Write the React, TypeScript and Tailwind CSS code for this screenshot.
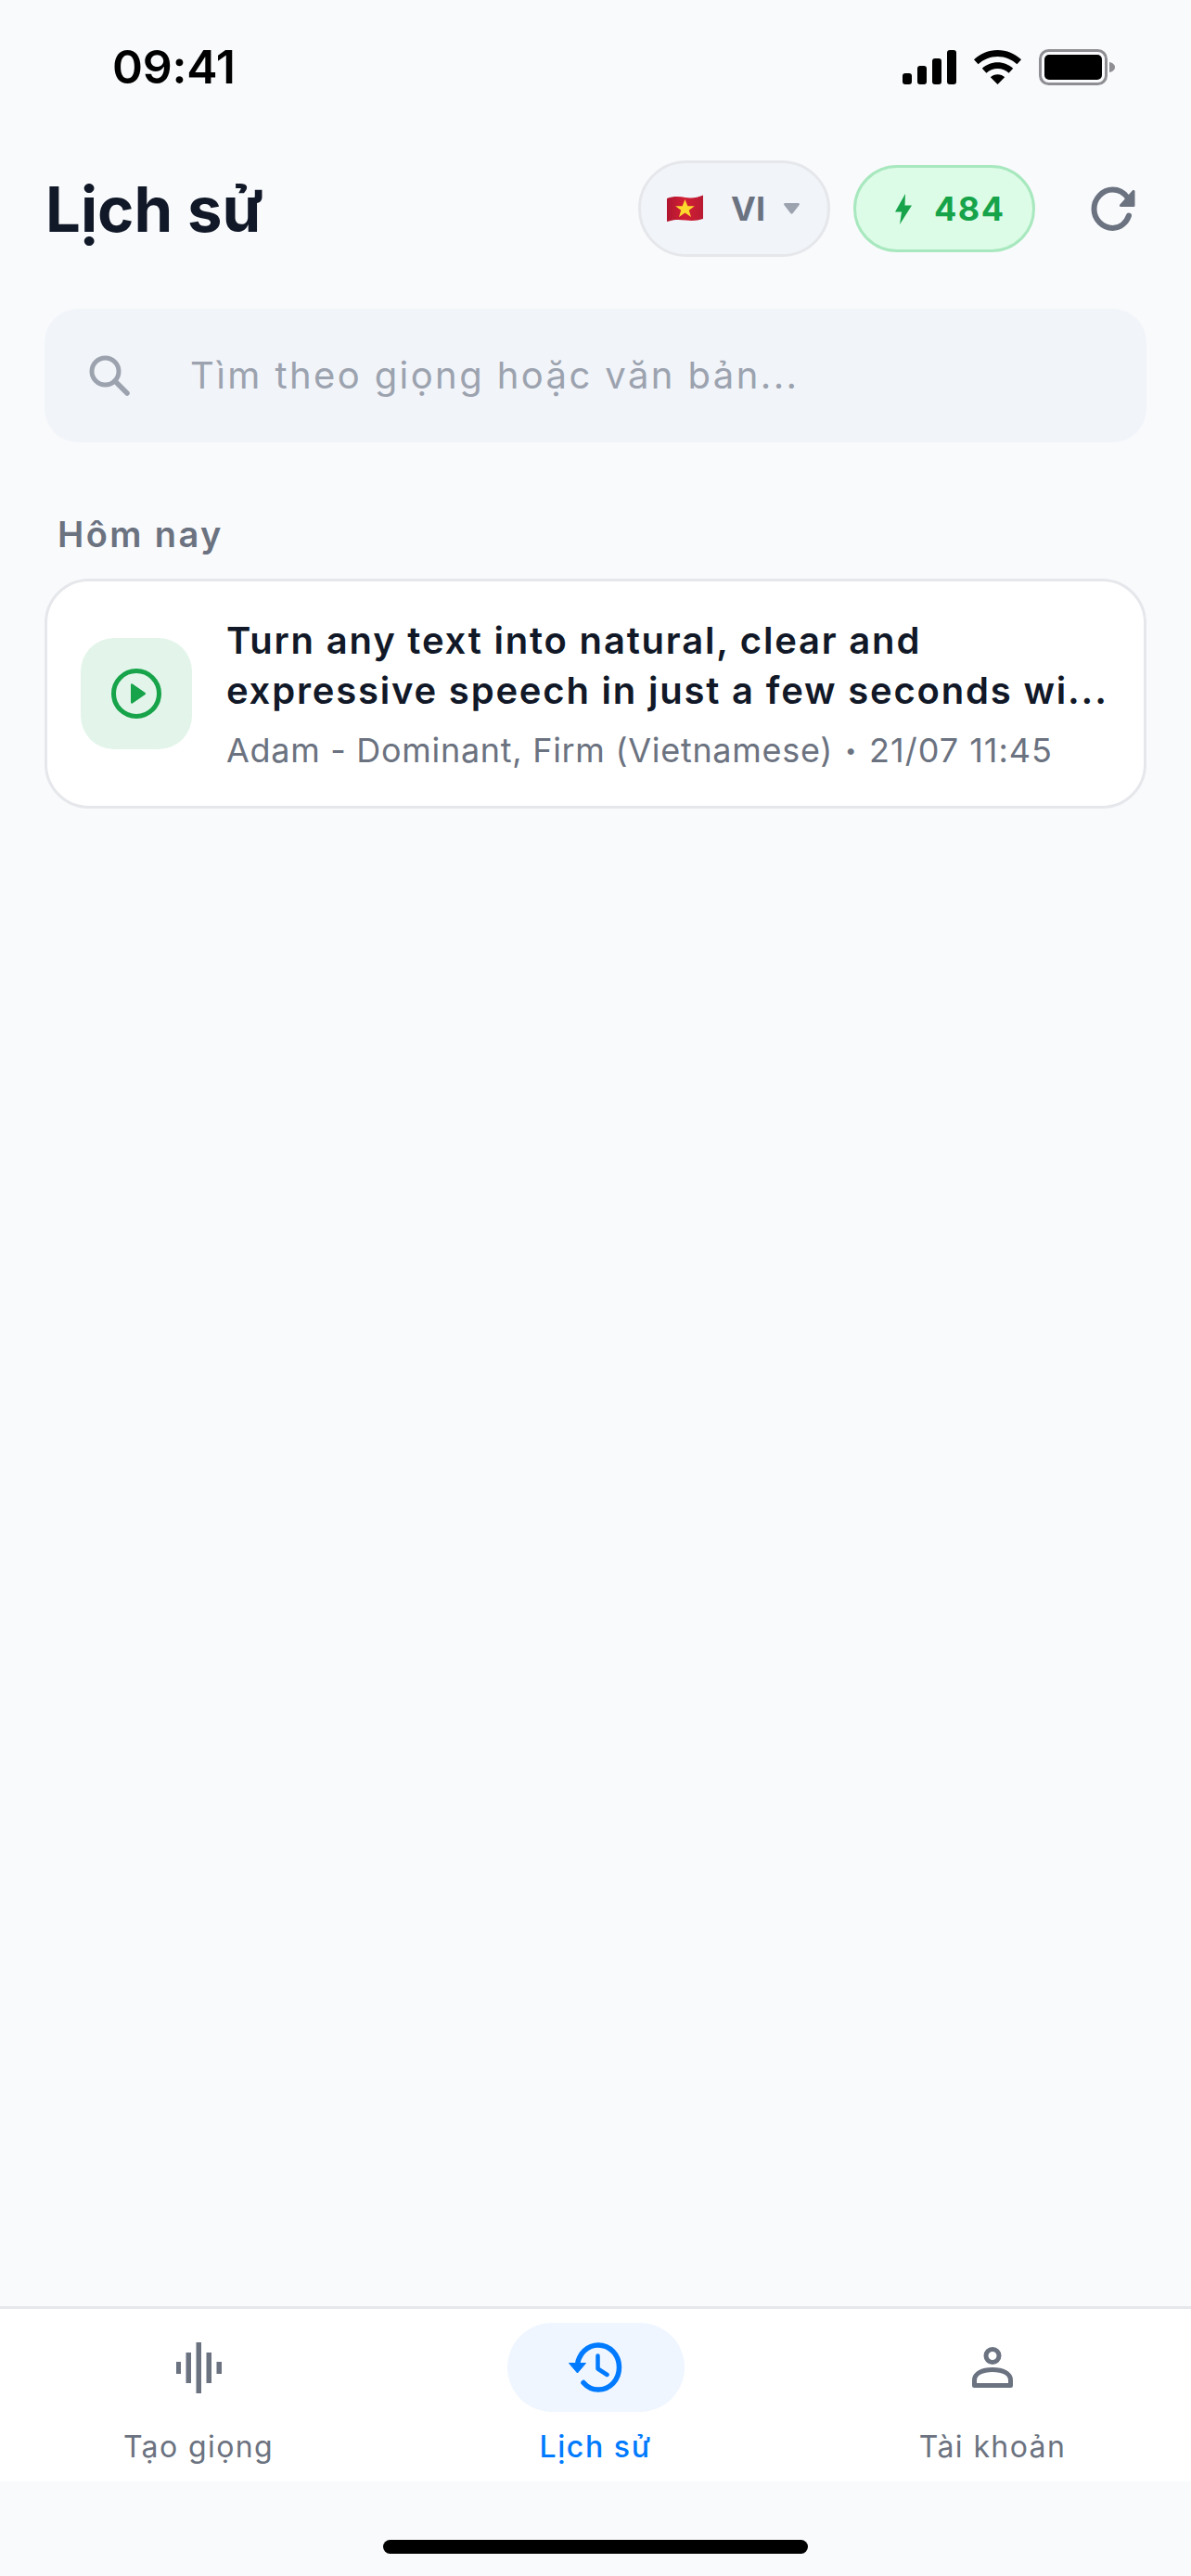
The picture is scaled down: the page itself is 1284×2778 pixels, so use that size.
import React from 'react';

const StatusIcons = () => (
  <div className="flex items-center gap-[19px]">
    <svg width="58" height="37" viewBox="0 0 58 37" fill="#000">
      <rect x="0" y="25" width="10" height="12" rx="3" />
      <rect x="16" y="17" width="10" height="20" rx="3" />
      <rect x="32" y="9" width="10" height="28" rx="3" />
      <rect x="48" y="0" width="10" height="37" rx="3" />
    </svg>
    <svg width="51" height="37" viewBox="0 0 51 37" fill="#000">
      <path d="M25.5 0C35.4 0 44.2 3.9 51 10.2L46.4 15.2C40.9 10.1 33.6 6.9 25.5 6.9C17.4 6.9 10.1 10.1 4.6 15.2L0 10.2C6.8 3.9 15.6 0 25.5 0Z" />
      <path d="M25.5 13.2C31.9 13.2 37.7 15.6 42.2 19.7L37.6 24.7C34.4 21.8 30.2 20.1 25.5 20.1C20.8 20.1 16.6 21.8 13.4 24.7L8.8 19.7C13.3 15.6 19.1 13.2 25.5 13.2Z" />
      <path d="M25.5 26.3C28.5 26.3 31.1 27.4 33.2 29.2L25.5 37L17.8 29.2C19.9 27.4 22.5 26.3 25.5 26.3Z" />
    </svg>
    <svg width="82" height="39" viewBox="0 0 82 39">
      <rect x="1.5" y="1.5" width="71" height="36" rx="9" fill="none" stroke="#8e8e93" strokeWidth="3" />
      <rect x="6" y="6" width="62" height="27" rx="5" fill="#000" />
      <path d="M76 14C79.500 14.600 82 16.800 82 19.500C82 22.200 79.500 24.400 76 25Z" fill="#8e8e93" />
    </svg>
  </div>
);

const Flag = () => (
  <svg width="39" height="30" viewBox="0 0 39 30">
    <defs>
      <linearGradient id="vn" x1="0" y1="0" x2="1" y2="0">
        <stop offset="0" stopColor="#b01530" />
        <stop offset="0.5" stopColor="#d21f35" />
        <stop offset="1" stopColor="#b81a32" />
      </linearGradient>
    </defs>
    <path d="M0 4C8 1 14 2 20 3C27 4 33 3 39 0.500V26C33 28 27 28.500 20 27.500C13 26.500 7 26.500 0 29Z" fill="url(#vn)" />
    <path d="M19.500 5L22.400 12.300H29.800L23.800 16.800L26 24L19.500 19.600L13 24L15.200 16.800L9.200 12.300H16.600Z" fill="#fcd92c" />
  </svg>
);

const RefreshIcon = () => (
  <svg width="48" height="48" viewBox="0 0 48 48" fill="none">
    <path d="M41 31.500C38.300 39.500 31.500 45 23.500 45C12.700 45 3.500 35.700 3.500 24.500C3.500 13.300 12.700 3.500 23.500 3.500C30.300 3.500 35.800 6.800 39.500 12" stroke="#6b7280" strokeWidth="6" strokeLinecap="round" />
    <path d="M47.500 5.500V20.500C47.500 21.500 46.800 22 46 22H32.500C31 22 30.400 20.400 31.400 19.400L44.800 4.500C45.800 3.600 47.500 4 47.500 5.500Z" fill="#6b7280" />
  </svg>
);

const PlayIcon = () => (
  <svg width="54" height="54" viewBox="0 0 54 54" fill="none">
    <circle cx="27" cy="27" r="24.500" stroke="#16a34a" strokeWidth="5" />
    <path d="M21 17.500C21 16.500 22 16 22.800 16.600L36.500 26C37.200 26.500 37.200 27.500 36.500 28L22.800 37.400C22 38 21 37.500 21 36.500Z" fill="#16a34a" />
  </svg>
);

const WaveIcon = () => (
  <svg width="49" height="55" viewBox="0 0 49 55" fill="#6b7280">
    <rect x="0" y="21" width="5" height="13" />
    <rect x="10.500" y="11" width="5.500" height="33" />
    <rect x="21.500" y="0" width="5.500" height="55" />
    <rect x="32.500" y="11" width="5.500" height="33" />
    <rect x="43.500" y="21" width="5.500" height="13" />
  </svg>
);

const HistoryIcon = () => (
  <svg width="58" height="54" viewBox="0 0 58 54" fill="none">
    <path d="M9.500 24C11 12 20.500 3 32 3C44.500 3 54.500 13.500 54.500 27C54.500 40.500 44.500 51 32 51C25.500 51 20 48.200 16 43.500" stroke="#007aff" strokeWidth="5.500" strokeLinecap="round" />
    <path d="M0.500 22.500H18.500L9.500 33Z" fill="#007aff" stroke="#007aff" strokeWidth="1" strokeLinejoin="round" />
    <path d="M31.500 14.500V28.500L41.500 35" stroke="#007aff" strokeWidth="4.500" strokeLinecap="round" strokeLinejoin="round" />
  </svg>
);

const PersonIcon = () => (
  <svg width="44" height="44" viewBox="0 0 44 44" fill="none">
    <circle cx="22" cy="9.500" r="7" stroke="#6b7280" strokeWidth="5" />
    <path d="M2.500 41.500V36C2.500 28.500 11 24.500 22 24.500C33 24.500 41.500 28.500 41.500 36V41.500Z" stroke="#6b7280" strokeWidth="5" strokeLinejoin="round" />
  </svg>
);

const tabs = [
  { label: 'Tạo giọng', icon: <WaveIcon />, active: false },
  { label: 'Lịch sử', icon: <HistoryIcon />, active: true },
  { label: 'Tài khoản', icon: <PersonIcon />, active: false },
];

export default function App() {
  return (
    <div className="flex h-[2778px] w-[1284px] flex-col bg-[#f9fafc] font-['Inter',sans-serif]">
      {/* status bar */}
      <div className="flex h-[146px] items-center justify-between pb-[2px] pl-[121px] pr-[82px]">
        <span className="text-[50px] leading-none font-semibold tracking-[-0.2px] text-black">09:41</span>
        <StatusIcons />
      </div>

      {/* header */}
      <div className="flex h-[158px] items-center justify-between pl-[49px] pr-[60px]">
        <h1 className="text-[67px] leading-none font-bold text-[#111827]">Lịch sử</h1>
        <div className="flex items-center">
          <div className="flex h-[104px] w-[207px] items-center rounded-full border-[3px] border-[#e5e7eb] bg-[#f1f4f9] pl-[28px]">
            <Flag />
            <span className="ml-[30px] text-[36px] leading-none font-bold text-[#6b7280]">VI</span>
            <svg className="ml-[20px]" width="17" height="12" viewBox="0 0 17 12" fill="#9ca3af">
              <path d="M1.500 0H15.500C16.800 0 17.400 1.400 16.500 2.300L9.500 11.300C9 11.900 8 11.900 7.500 11.300L0.500 2.300C-0.400 1.400 0.200 0 1.500 0Z" />
            </svg>
          </div>
          <div className="ml-[25px] flex h-[94px] w-[196px] items-center rounded-full border-[3px] border-[#a8e8be] bg-[#dcfce7] pl-[42px]">
            <svg width="18" height="33" viewBox="0 0 18 33" fill="#16a34a">
              <path d="M11 0L0 19.500H7L5 33L18 12.500H10.500Z" />
            </svg>
            <span className="ml-[24px] text-[36px] leading-none font-bold tracking-[1.5px] text-[#16a34a]">484</span>
          </div>
          <div className="ml-[60px]">
            <RefreshIcon />
          </div>
        </div>
      </div>

      {/* search */}
      <div className="mx-[48px] mt-[29px] flex h-[144px] items-center rounded-[36px] bg-[#f1f4f9] pl-[48px]">
        <svg width="44" height="44" viewBox="0 0 44 44" fill="none">
          <circle cx="17.500" cy="17.500" r="14.500" stroke="#9ca3af" strokeWidth="5" />
          <path d="M28 28L41 41" stroke="#9ca3af" strokeWidth="5.500" strokeLinecap="round" />
        </svg>
        <span className="ml-[65px] text-[40px] leading-none tracking-[2.4px] text-[#9ca3af]">Tìm theo giọng hoặc văn bản...</span>
      </div>

      {/* list */}
      <div className="mx-[48px] mt-[77px]">
        <div className="pl-[14px] text-[38px] leading-[44px] font-semibold tracking-[2.4px] text-[#6b7280]">Hôm nay</div>
        <div className="mt-[26px] flex h-[248px] items-center rounded-[48px] border-[3px] border-[#e5e7eb] bg-white pl-[36px] pr-[22px]">
          <div className="flex h-[120px] w-[120px] shrink-0 items-center justify-center rounded-[36px] bg-[#e3f5ea]">
            <PlayIcon />
          </div>
          <div className="ml-[37px] min-w-0 flex-1">
            <p className="text-[40px] leading-[54px] font-semibold tracking-[1.8px] text-[#111827]">
              Turn any text into natural, clear and expressive speech in just a few seconds wi...
            </p>
            <div className="mt-[13px] flex items-center whitespace-nowrap text-[36px] leading-[48px] tracking-[0.7px] text-[#6b7280]">
              <span>Adam - Dominant, Firm (Vietnamese)</span>
              <span className="mx-[13px] text-[22px]">•</span>
              <span className="tracking-[1px]">21/07 11:45</span>
            </div>
          </div>
        </div>
      </div>

      <div className="flex-1" />

      {/* tab bar */}
      <div className="grid h-[189px] grid-cols-3 border-t-[3px] border-[#e5e7eb] bg-white">
        {tabs.map(tab => (
          <div key={tab.label} className="flex flex-col items-center pt-[15px]">
            <div className={`flex h-[96px] w-[191px] items-center justify-center rounded-[48px] ${tab.active ? 'bg-[#eff6ff]' : ''}`}>
              {tab.icon}
            </div>
            <span className={`mt-[18px] text-[32px] leading-[40px] ${tab.active ? 'font-medium tracking-[1.6px] text-[#007aff]' : 'tracking-[1.4px] text-[#6b7280]'}`}>
              {tab.label}
            </span>
          </div>
        ))}
      </div>

      {/* home indicator */}
      <div className="flex h-[102px] justify-center pt-[63px]">
        <div className="h-[15px] w-[458px] rounded-full bg-black" />
      </div>
    </div>
  );
}
